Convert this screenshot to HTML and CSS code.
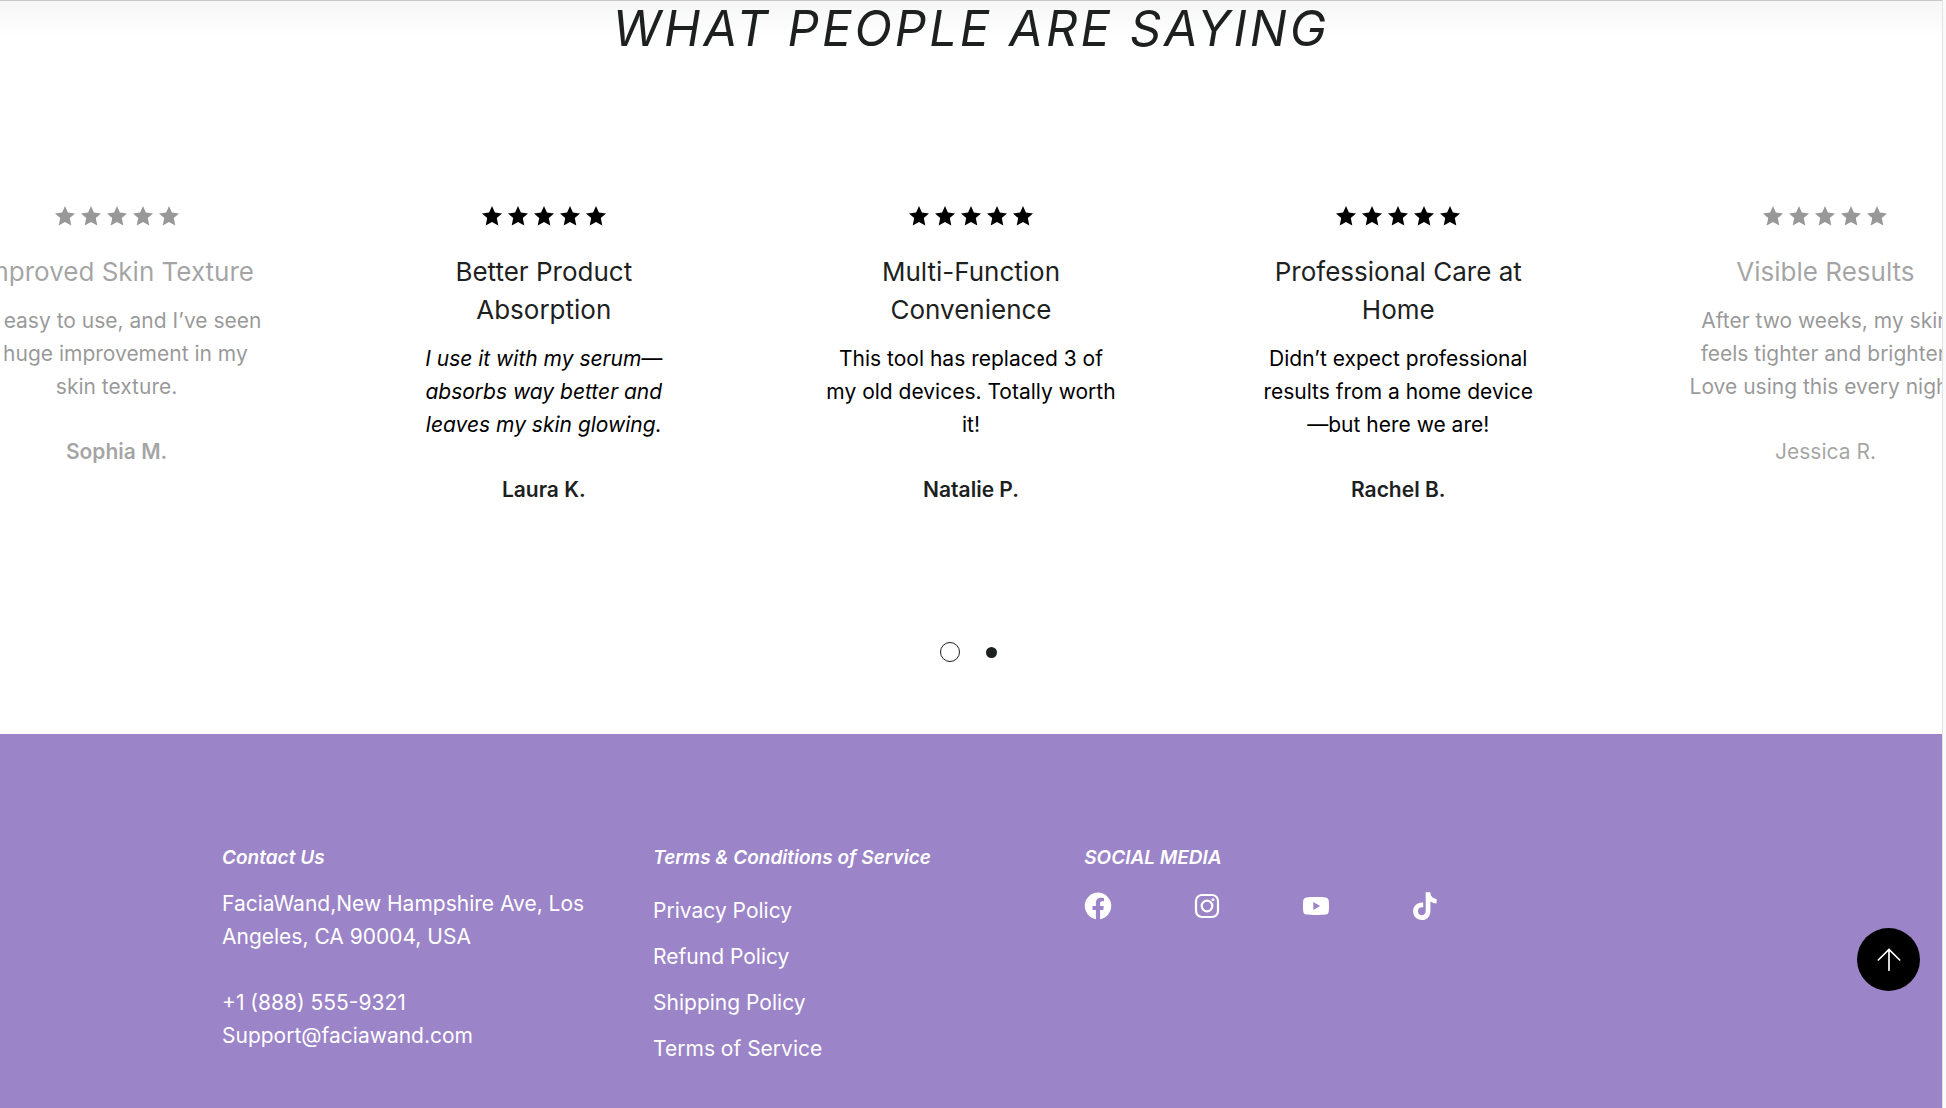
FILE: index.html
```html
<!DOCTYPE html>
<html lang="en">
<head>
<meta charset="utf-8">
<meta name="viewport" content="width=device-width, initial-scale=1">
<title>FaciaWand</title>
<link rel="stylesheet" href="styles.css">
</head>
<body>
<svg class="defs" aria-hidden="true">
  <symbol id="star" viewBox="0 0 20 20"><path d="M10 0l2.900 6.500 7.100.9-5.200 4.700 1.500 7.300L10 16l-6.300 3.400 1.500-7.300L0 7.400l7.100-.9z"/></symbol>
  <symbol id="stars" viewBox="0 0 124 20">
    <use href="#star" x="0" width="20" height="20"/><use href="#star" x="26" width="20" height="20"/><use href="#star" x="52" width="20" height="20"/><use href="#star" x="78" width="20" height="20"/><use href="#star" x="104" width="20" height="20"/>
  </symbol>
</svg>
<div class="page">
  <main class="reviews">
    <h2 class="reviews-title">WHAT PEOPLE ARE SAYING</h2>
    <div class="track">
      <article class="card faded">
        <svg class="stars" role="img" aria-label="5 stars"><use href="#stars"/></svg>
        <h3>Improved Skin Texture</h3>
        <p>So easy to use, and I’ve seen<br>a huge improvement in my<br>skin texture.</p>
        <p class="author"><strong>Sophia M.</strong></p>
      </article>
      <article class="card">
        <svg class="stars" role="img" aria-label="5 stars"><use href="#stars"/></svg>
        <h3>Better Product<br>Absorption</h3>
        <p><em>I use it with my serum—<br>absorbs way better and<br>leaves my skin glowing.</em></p>
        <p class="author"><strong>Laura K.</strong></p>
      </article>
      <article class="card">
        <svg class="stars" role="img" aria-label="5 stars"><use href="#stars"/></svg>
        <h3>Multi-Function<br>Convenience</h3>
        <p>This tool has replaced 3 of<br>my old devices. Totally worth<br>it!</p>
        <p class="author"><strong>Natalie P.</strong></p>
      </article>
      <article class="card">
        <svg class="stars" role="img" aria-label="5 stars"><use href="#stars"/></svg>
        <h3>Professional Care at<br>Home</h3>
        <p>Didn’t expect professional<br>results from a home device<br>—but here we are!</p>
        <p class="author"><strong>Rachel B.</strong></p>
      </article>
      <article class="card faded">
        <svg class="stars" role="img" aria-label="5 stars"><use href="#stars"/></svg>
        <h3>Visible Results</h3>
        <p>After two weeks, my skin<br>feels tighter and brighter.<br>Love using this every night!</p>
        <p class="author">Jessica R.</p>
      </article>
    </div>
    <div class="dots">
      <button class="dot current" type="button" aria-label="Page 1"></button>
      <button class="dot" type="button" aria-label="Page 2"></button>
    </div>
  </main>
  <footer class="footer">
    <div class="footer-inner">
      <section>
        <h2>Contact Us</h2>
        <p>FaciaWand,New Hampshire Ave, Los<br>Angeles, CA 90004, USA</p>
        <p class="reach">+1 (888) 555-9321<br>Support@faciawand.com</p>
      </section>
      <section>
        <h2>Terms &amp; Conditions of Service</h2>
        <ul class="links">
          <li><a href="#">Privacy Policy</a></li>
          <li><a href="#">Refund Policy</a></li>
          <li><a href="#">Shipping Policy</a></li>
          <li><a href="#">Terms of Service</a></li>
        </ul>
      </section>
      <section>
        <h2>SOCIAL MEDIA</h2>
        <div class="social">
          <a href="#" aria-label="Facebook"><svg viewBox="0 0 28 28"><path fill="currentColor" d="M14 .5a13.500 13.500 0 0 0-2.100 26.800v-9.400H8.500V14h3.400v-3c0-3.400 2-5.300 5.100-5.300 1.500 0 3 .3 3 .3v3.300h-1.700c-1.700 0-2.200 1-2.200 2.100V14h3.700l-.6 3.900h-3.100v9.400A13.500 13.500 0 0 0 14 .5z"/></svg></a>
          <a href="#" aria-label="Instagram"><svg viewBox="0 0 28 28" fill="none" stroke="currentColor" stroke-width="2.200"><rect x="3" y="3" width="22" height="22" rx="6"/><circle cx="14" cy="14" r="5.300"/><circle cx="20" cy="7.800" r="1.500" fill="currentColor" stroke="none"/></svg></a>
          <a href="#" aria-label="YouTube"><svg viewBox="0 0 28 28"><path fill="currentColor" fill-rule="evenodd" d="M4.500 5.400c4-.6 15-.6 19 0 2.400.4 3.100 1.700 3.300 3.600.3 3 .3 7 0 10-.2 2-.9 3.200-3.300 3.600-4 .6-15 .6-19 0C2.100 22.200 1.400 21 1.200 19c-.3-3-.3-7 0-10 .2-1.900.9-3.200 3.300-3.600zM11.300 10v8l6.900-4z"/></svg></a>
          <a href="#" aria-label="TikTok"><svg viewBox="0 0 28 28"><path fill="currentColor" d="M14.700.300h4.600c.3 3.900 2.600 6.300 6.300 6.600v4.600c-2.300 0-4.400-.7-6.200-2v9.700c0 5.300-3.600 8.800-8.500 8.800-5 0-8.800-3.700-8.800-8.700 0-5.300 4.300-9.300 10.100-8.700v4.800c-3.100-.6-5.300 1-5.300 3.800 0 2.300 1.700 4 4 4s3.800-1.500 3.800-4.200z"/></svg></a>
        </div>
      </section>
    </div>
  </footer>
</div>
<button class="to-top" type="button" aria-label="Back to top"><svg viewBox="0 0 28 28" fill="none" stroke="currentColor" stroke-width="1.800" stroke-linecap="round"><path d="M14 25V3M2.500 14L14 2.500 25.500 14"/></svg></button>
</body>
</html>
```
FILE: styles.css
```css
* { box-sizing: border-box; }
body {
  margin: 0;
  background: #fafafa;
  font: 21px/33px Inter, "Liberation Sans", sans-serif;
  color: #000;
}
h2, h3, p, ul { margin: 0; padding: 0; }
.defs { display: none; }
.page {
  display: flex;
  flex-direction: column;
  min-height: 100vh;
  margin-right: 3px;
  border-right: 1px solid #e2e2e2;
  overflow: hidden;
  background: #fff;
}
.reviews {
  border-top: 1px solid #c8c8c8;
  background: linear-gradient(#f6f6f6, #fff 36px);
}
.reviews-title {
  font-size: 49px;
  line-height: 56px;
  font-weight: 400;
  font-style: italic;
  letter-spacing: 3px;
  text-align: center;
  color: #1e1f1f;
}
.track {
  display: flex;
  justify-content: center;
  margin-top: 149px;
  min-height: 340px;
}
.card { flex: 0 0 22%; text-align: center; white-space: nowrap; }
.card.faded { opacity: .4; }
.stars { display: block; width: 124px; height: 20px; margin: 0 auto 27px; }
.card h3 {
  margin-bottom: 13px;
  font-size: 26px;
  line-height: 38px;
  font-weight: 400;
  color: #1e1f1f;
}
.author { margin-top: 32px; color: #1e1f1f; }
strong { font-weight: 600; }
.dots {
  display: flex;
  justify-content: center;
  align-items: center;
  gap: 26px;
  margin: 96px 5px 0 0;
  padding-bottom: 72px;
}
.dot {
  width: 11px;
  height: 11px;
  padding: 0;
  border: 0;
  border-radius: 50%;
  background: #1e1f1f;
}
.dot.current { width: 20px; height: 20px; border: 1px solid #1e1f1f; background: none; }
.footer { flex: 1; padding: 107px 0 40px; background: #9b84c7; color: #fff; }
.footer-inner {
  display: grid;
  grid-template-columns: 1fr 1fr 1fr;
  gap: 31px;
  width: 65%;
  margin-left: 222px;
}
.footer h2 {
  margin-bottom: 13px;
  font-size: 19px;
  line-height: 33px;
  font-weight: 600;
  font-style: italic;
  white-space: nowrap;
}
.footer p { white-space: nowrap; }
.footer .reach { margin-top: 33px; }
.links { list-style: none; }
.links a { display: block; padding: 7px 0 6px; color: inherit; text-decoration: none; }
.social { display: flex; gap: 81px; padding-top: 5px; }
.social a { color: inherit; }
.social svg { display: block; width: 28px; height: 28px; }
.to-top {
  position: fixed;
  right: 26px;
  bottom: 117px;
  display: grid;
  place-items: center;
  width: 63px;
  height: 63px;
  padding: 0;
  border: 0;
  border-radius: 50%;
  background: #000;
  color: #fff;
}
.to-top svg { width: 26px; height: 26px; }
```
